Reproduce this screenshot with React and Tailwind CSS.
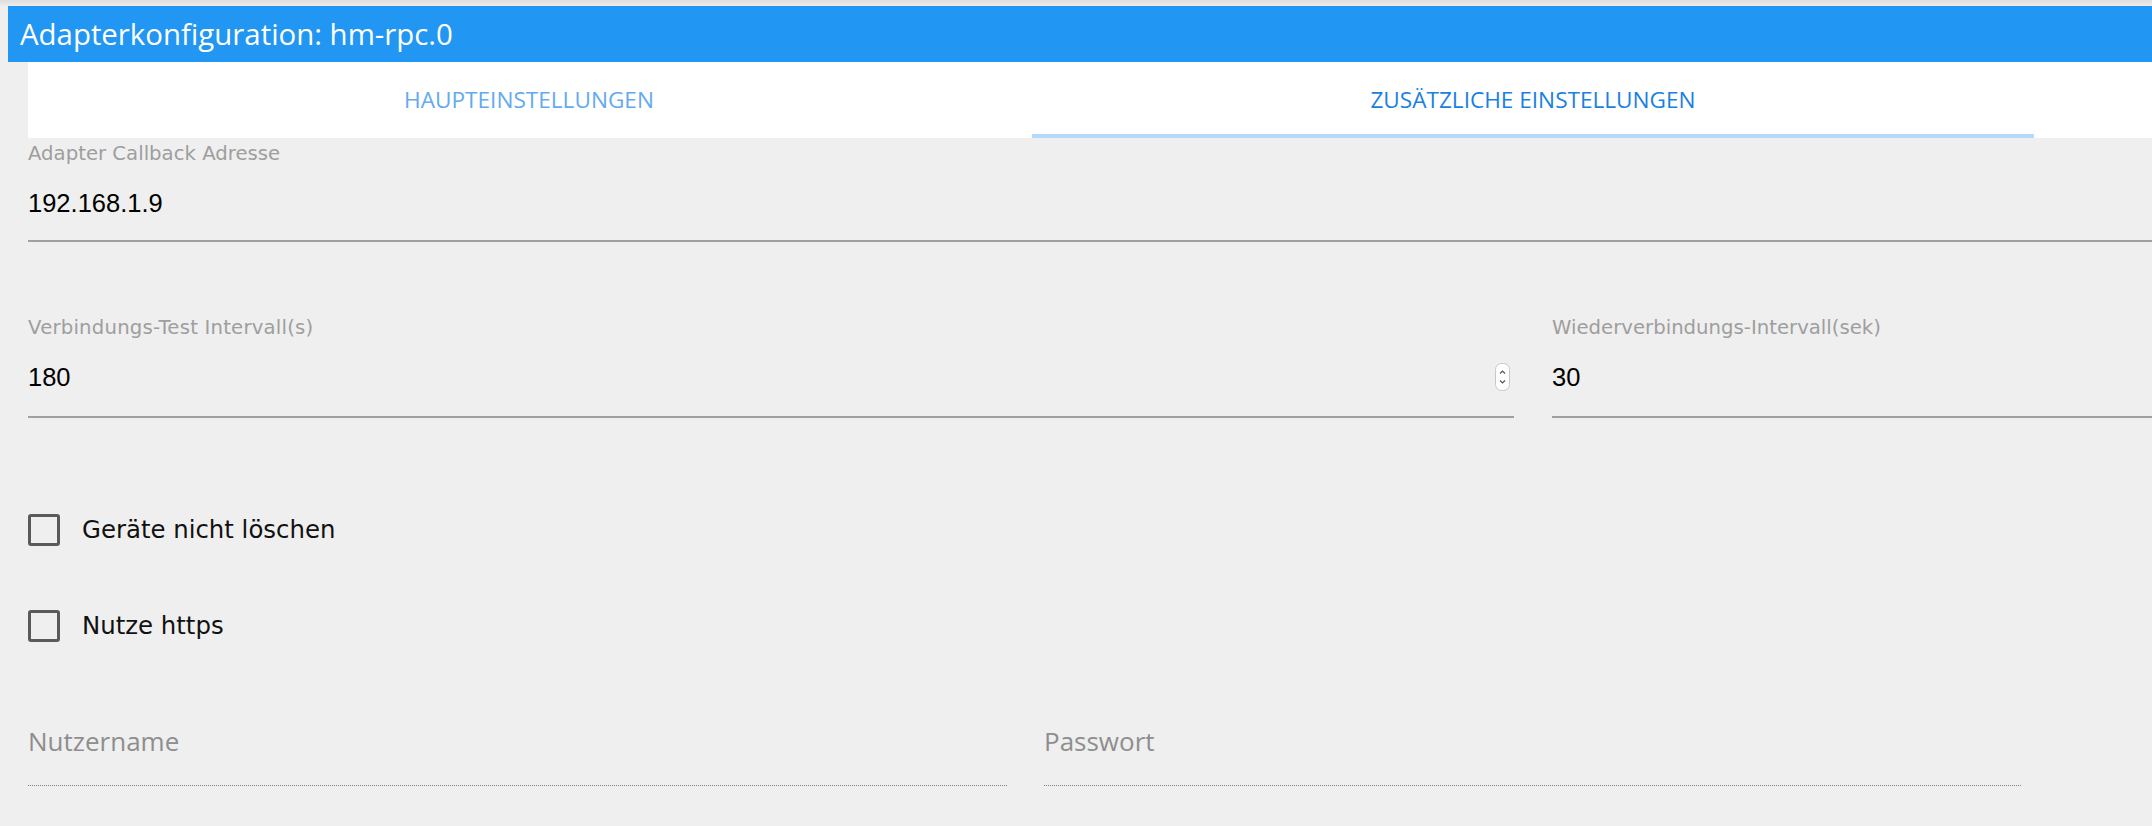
import React from "react";

const labelCls =
  "block text-[19.7px] leading-[24px] text-[#9e9e9e] font-['DejaVu_Sans',sans-serif] whitespace-nowrap";
const valueCls =
  "text-[25.5px] leading-[32px] text-black font-['Liberation_Sans',Arial,sans-serif]";

function Spinner() {
  return (
    <svg width="15" height="28" viewBox="0 0 15 28" className="mr-[4px] shrink-0">
      <rect x="0.5" y="0.5" width="14" height="27" rx="6" fill="#ffffff" stroke="#c8c8c8" />
      <path d="M5 10.5 L7.5 8 L10 10.5" fill="none" stroke="#555" strokeWidth="1.2" />
      <path d="M5 17.5 L7.5 20 L10 17.5" fill="none" stroke="#555" strokeWidth="1.2" />
    </svg>
  );
}

function Checkbox({ label, className = "" }) {
  return (
    <div className={"flex items-center h-[32px] " + className}>
      <div className="w-[32px] h-[32px] border-[3px] border-[#5a5a5a] rounded-[3px] shrink-0" />
      <span className="ml-[22px] text-[24.4px] leading-[32px] text-[#111] font-['DejaVu_Sans',sans-serif]">
        {label}
      </span>
    </div>
  );
}

export default function App() {
  return (
    <div className="w-[2152px] min-h-[826px] bg-[#efefef] overflow-hidden">
      <div className="h-[6px] bg-gradient-to-b from-[#dedede] to-[#ececec]" />
      <div className="ml-[8px] h-[56px] bg-[#2196f3] flex items-center pl-[12px]">
        <span className="text-white text-[29.4px] font-['Open_Sans',sans-serif] whitespace-nowrap">
          Adapterkonfiguration: hm-rpc.0
        </span>
      </div>
      <div className="ml-[28px] h-[76px] bg-white flex">
        <div className="w-[1002px] h-full flex items-center justify-center">
          <span className="text-[22.6px] text-[#64aaf0] font-['Open_Sans',sans-serif]">HAUPTEINSTELLUNGEN</span>
        </div>
        <div className="ml-[2px] w-[1002px] h-full flex flex-col">
          <div className="flex-1 flex items-center justify-center pt-[4px]">
            <span className="text-[22.6px] text-[#1a80e2] font-['Open_Sans',sans-serif]">ZUSÄTZLICHE EINSTELLUNGEN</span>
          </div>
          <div className="h-[4px] bg-[#b3dafa]" />
        </div>
      </div>

      <div className="pl-[28px]">
        {/* Callback address */}
        <div className="mt-[4px]">
          <span className={labelCls}>Adapter Callback Adresse</span>
          <div className={"mt-[21px] " + valueCls}>192.168.1.9</div>
          <div className="mt-[21px] h-[2px] bg-[#a0a0a0]" />
        </div>

        {/* Intervals */}
        <div className="mt-[74px] flex">
          <div className="w-[1486px] shrink-0">
            <span className={labelCls + " tracking-[0.2px]"}>Verbindungs-Test Intervall(s)</span>
            <div className="mt-[21px] flex items-center justify-between">
              <span className={valueCls}>180</span>
              <Spinner />
            </div>
            <div className="mt-[23px] h-[2px] bg-[#a0a0a0]" />
          </div>
          <div className="ml-[38px] flex-1">
            <span className={labelCls}>Wiederverbindungs-Intervall(sek)</span>
            <div className="mt-[21px] flex items-center">
              <span className={valueCls}>30</span>
            </div>
            <div className="mt-[23px] h-[2px] bg-[#a0a0a0]" />
          </div>
        </div>

        {/* Checkboxes */}
        <Checkbox label="Geräte nicht löschen" className="mt-[96px]" />
        <Checkbox label="Nutze https" className="mt-[64px]" />

        {/* Credentials */}
        <div className="mt-[81px] flex">
          <div className="w-[979px] shrink-0">
            <div className="text-[26px] leading-[37px] text-[#8e8e8e] font-['Open_Sans',sans-serif]">Nutzername</div>
            <div className="mt-[25px] border-t border-dotted border-[#808080]" />
          </div>
          <div className="ml-[37px] w-[977px] shrink-0">
            <div className="text-[26px] leading-[37px] text-[#8e8e8e] font-['Open_Sans',sans-serif]">Passwort</div>
            <div className="mt-[25px] border-t border-dotted border-[#808080]" />
          </div>
        </div>
      </div>
    </div>
  );
}
